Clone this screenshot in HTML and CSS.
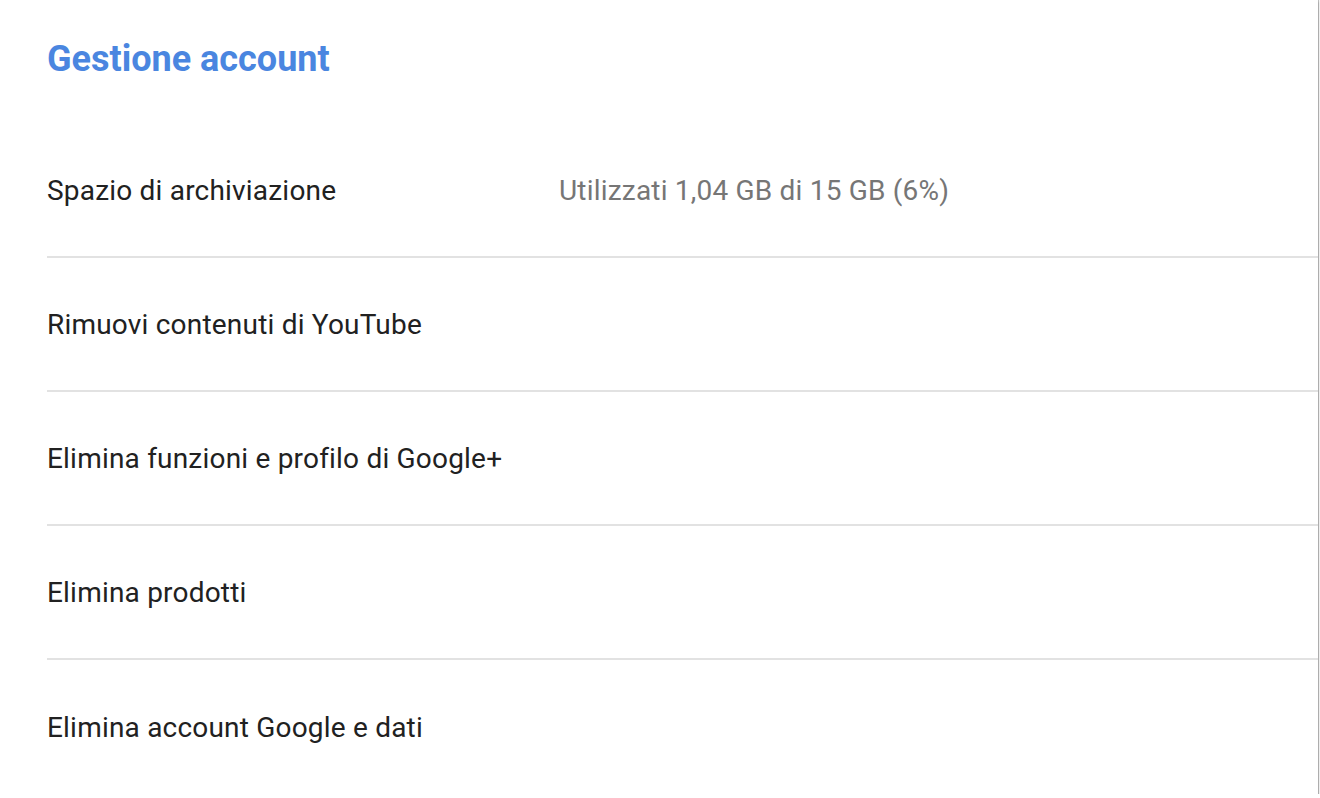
FILE: index.html
```html
<!DOCTYPE html>
<html lang="it">
<head>
  <meta charset="UTF-8" />
  <meta name="viewport" content="width=device-width, initial-scale=1.0" />
  <title>Gestione account</title>
  <link rel="stylesheet" href="styles.css">
</head>
<body>
  <div class="card">
    <h1 class="card-title">Gestione account</h1>
    <div class="list">
      <div class="row">
        <span class="label">Spazio di archiviazione</span>
        <span class="value">Utilizzati 1,04 GB di 15 GB (6%)</span>
      </div>
      <div class="row">
        <span class="label">Rimuovi contenuti di YouTube</span>
      </div>
      <div class="row">
        <span class="label">Elimina funzioni e profilo di Google+</span>
      </div>
      <div class="row">
        <span class="label">Elimina prodotti</span>
      </div>
      <div class="row">
        <span class="label">Elimina account Google e dati</span>
      </div>
    </div>
  </div>
</body>
</html>
```

FILE: styles.css
```css
* {
  margin: 0;
  padding: 0;
  box-sizing: border-box;
  font-family: Roboto, "Noto Sans", sans-serif;
}
body {
  background: #fff;
}
.card {
  width: 1318px;
  height: 794px;
  background: #fff;
  padding-left: 47px;
  box-shadow: 1px 0 1px rgba(0, 0, 0, 0.25), 0 2px 2px rgba(0, 0, 0, 0.3);
  display: flex;
  flex-direction: column;
}
.card-title {
  height: 127px;
  display: flex;
  align-items: center;
  padding-bottom: 6px;
  font-size: 36px;
  font-weight: 700;
  color: #4a86e0;
}
.list {
  display: flex;
  flex-direction: column;
}
.row {
  height: 134px;
  display: flex;
  align-items: center;
  border-bottom: 2px solid #e2e2e2;
  font-size: 28px;
  letter-spacing: 0.2px;
}
.row:last-child {
  border-bottom: none;
}
.label {
  width: 512px;
  color: #212121;
}
.value {
  color: #767676;
}
```
